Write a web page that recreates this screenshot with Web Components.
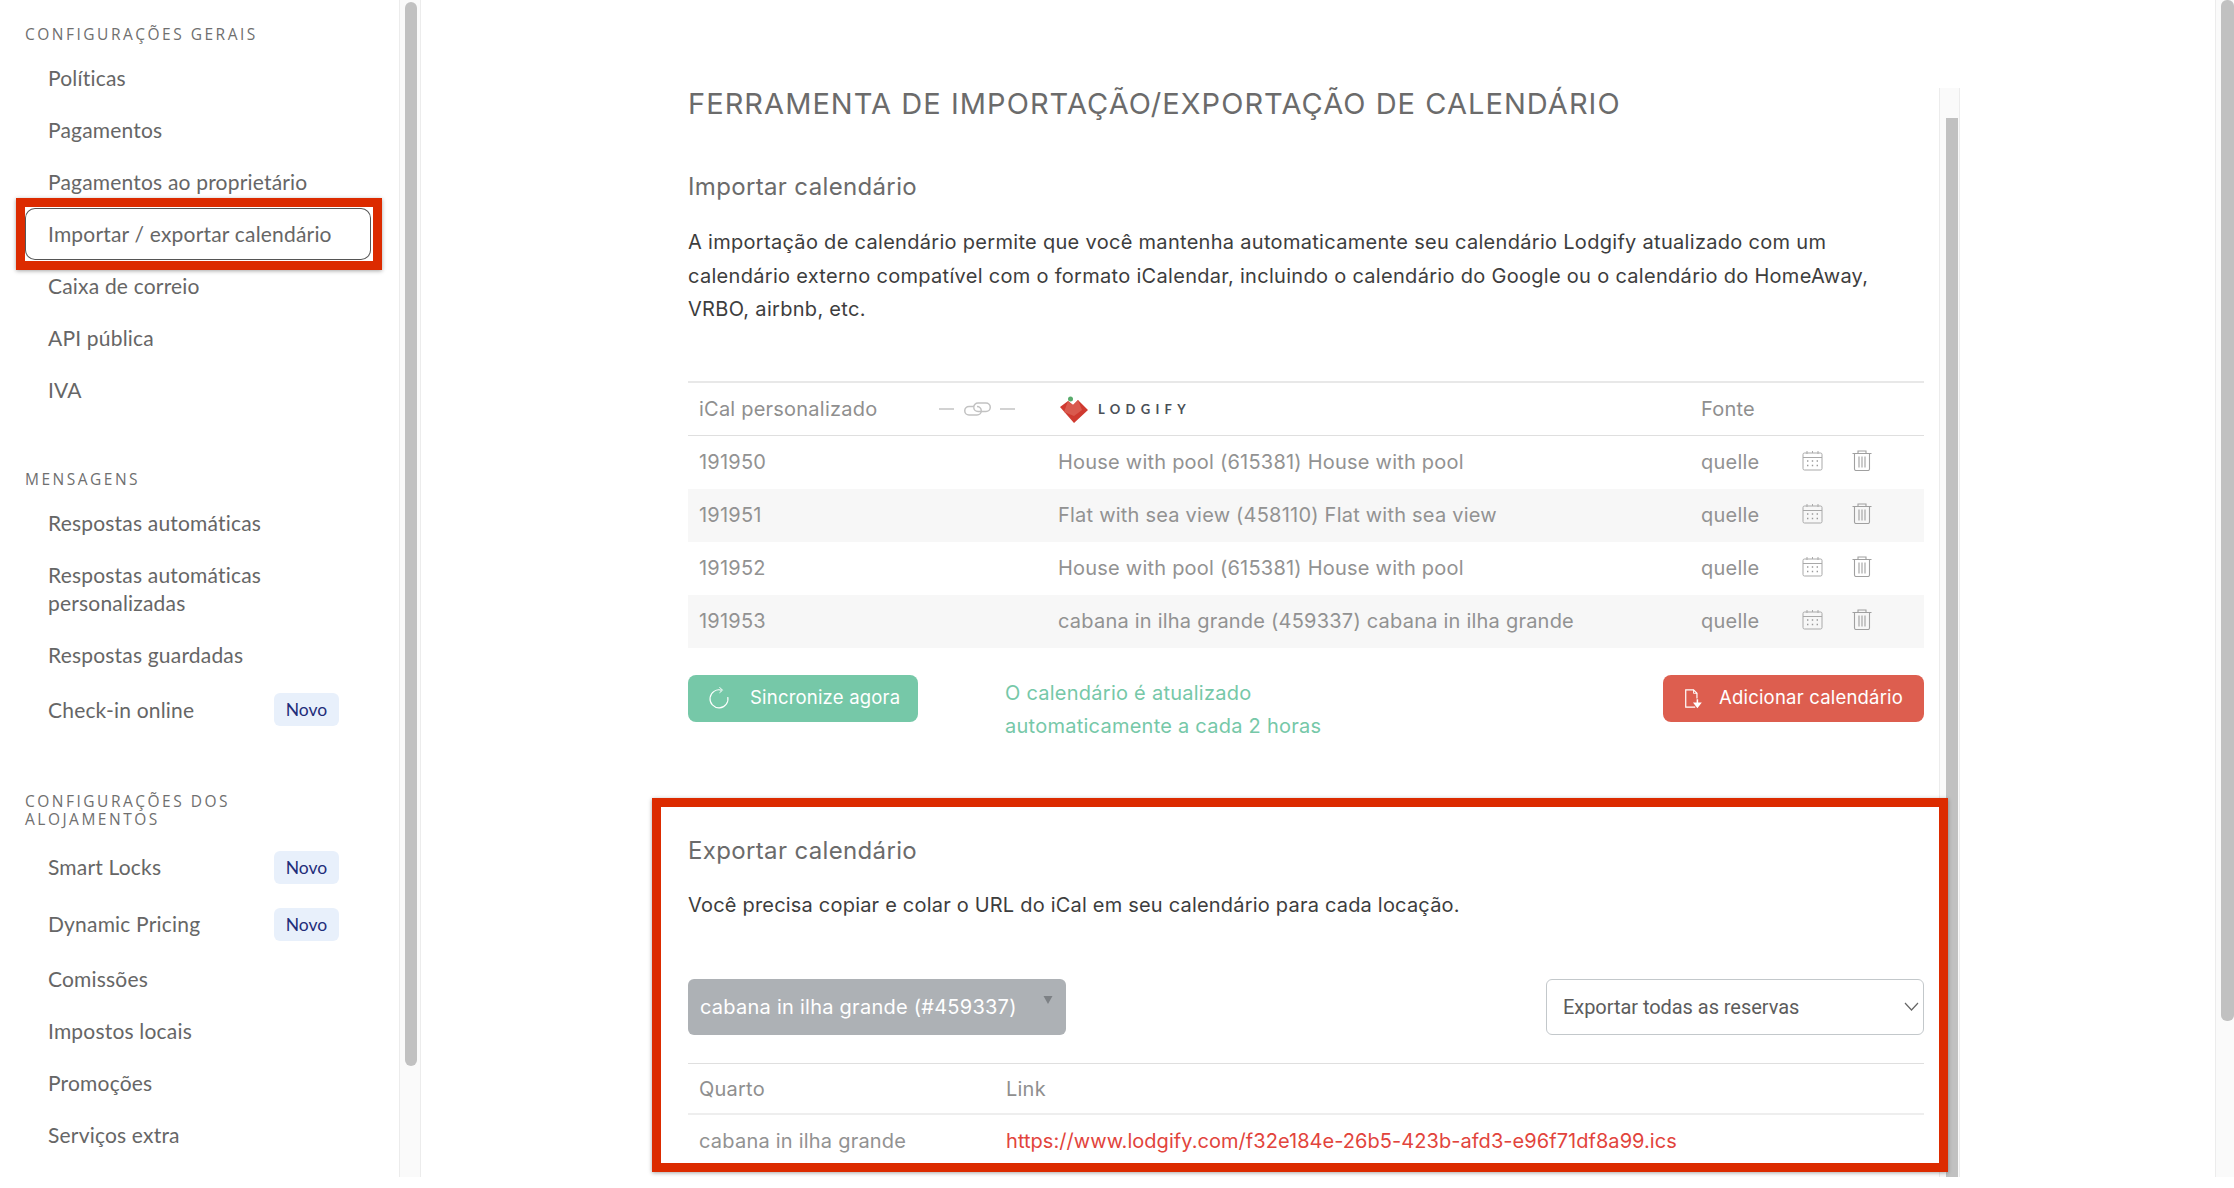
<!DOCTYPE html>
<html lang="pt">
<head>
<meta charset="utf-8">
<title>Importar / exportar calendário</title>
<style>
  html, body { margin: 0; height: 100%; overflow: hidden; background: #fff; }
</style>
</head>
<body>
<app-shell>
  <side-nav slot="nav">
    <nav-heading>Configurações gerais</nav-heading>
    <nav-item>Políticas</nav-item>
    <nav-item>Pagamentos</nav-item>
    <nav-item>Pagamentos ao proprietário</nav-item>
    <nav-item active>Importar / exportar calendário<red-mark slot="mark"></red-mark></nav-item>
    <nav-item>Caixa de correio</nav-item>
    <nav-item>API pública</nav-item>
    <nav-item>IVA</nav-item>
    <nav-heading>Mensagens</nav-heading>
    <nav-item>Respostas automáticas</nav-item>
    <nav-item>Respostas automáticas personalizadas</nav-item>
    <nav-item>Respostas guardadas</nav-item>
    <nav-item badge>Check-in online</nav-item>
    <nav-heading wide>Configurações dos alojamentos</nav-heading>
    <nav-item badge>Smart Locks</nav-item>
    <nav-item badge>Dynamic Pricing</nav-item>
    <nav-item>Comissões</nav-item>
    <nav-item>Impostos locais</nav-item>
    <nav-item>Promoções</nav-item>
    <nav-item>Serviços extra</nav-item>
  </side-nav>
  <calendar-tool slot="main"></calendar-tool>
</app-shell>

<script>
// icones do painel, desenhados a mao
const ICONS = {
  calendar: `<svg width="21" height="21" viewBox="0 0 21 21" fill="none" stroke="#a9a9a9" stroke-width="1">
    <rect x="1" y="3" width="19" height="17" rx="1.5"/><path d="M1 7.5h19M5 1v3M10.5 1v2M16 1v3"/>
    <path d="M5 11h1.4M9.8 11h1.4M14.6 11h1.4M5 15.5h1.4M9.8 15.5h1.4M14.6 15.5h1.4" stroke-width="1.6" stroke="#999"/></svg>`,
  trash: `<svg width="20" height="21" viewBox="0 0 20 21" fill="none" stroke="#a0a0a0" stroke-width="1.1">
    <path d="M0.5 3.5h19M6 3.5V1h8v2.5M2.500 3.500V19a1.500 1.500 0 0 0 1.500 1.500h12a1.500 1.500 0 0 0 1.500-1.500V3.500M7 6.500v11M10 6.500v11M13 6.500v11"/></svg>`,
  sync: `<svg width="22" height="24" viewBox="0 0 22 24" fill="none" stroke="#fff" stroke-width="1.100">
    <path d="M13.500 4.200A9 9 0 1 0 19.800 11"/><path d="M11.500 1.200l3 3-3 2.600" stroke-width="1"/></svg>`,
  addfile: `<svg width="19" height="21" viewBox="0 0 22 24" fill="none" stroke="#fff" stroke-width="1.400">
    <path d="M13 22H2V2h9l4 4v6"/><path d="M11 2v4h4" stroke-width="1"/><path d="M15.500 13v5M12.200 17.500h6.600L15.500 21.800z" fill="#fff" stroke-width="1.800"/></svg>`,
  link: `<svg width="27" height="14" viewBox="0 0 27 14" fill="none" stroke="#c2c2c2" stroke-width="1.500">
    <path d="M10 4.500H5a4.250 4.250 0 0 0 0 8.500h8a4.250 4.250 0 0 0 4.250-4.250A4.250 4.250 0 0 0 13 4.500"/>
    <path d="M9.750 5.250A4.250 4.250 0 0 1 14 1h8a4.250 4.250 0 0 1 0 8.500h-5"/><path d="M9.750 5.250A4.250 4.250 0 0 0 14 9.500h3"/></svg>`,
  heart: `<svg width="28" height="27" viewBox="0 0 28 27">
    <circle cx="10.500" cy="3" r="2.500" fill="#58ab6c"/>
    <path d="M0 11 8 5l5 4 5-5 10 10-14 13z" fill="#cf3a30"/><path d="M8 5l5 4 5-5 4 10-8 6-10-4z" fill="#d95a4e"/></svg>`
};

class UiIcon extends HTMLElement {
  connectedCallback() {
    this.attachShadow({mode: "open"}).innerHTML = `
      <style>:host{display:inline-flex;line-height:0}</style>${ICONS[this.getAttribute("name")]}`;
  }
}

class AppShell extends HTMLElement {
  constructor() {
    super();
    this.attachShadow({mode: "open"}).innerHTML = `
    <style>
      :host{display:flex;height:1177px;overflow:hidden;background:#fff}
      .rail{flex:none;width:19px;background:#fafafa;border-left:1px solid #ececec;box-sizing:border-box;padding-left:5px}
      .rail i{display:block;width:13px;height:1021px;background:#c1c1c1;border-radius:6px}
      .rail.side{width:22px;border-right:1px solid #ececec;padding:2px 0 0 5px}
      .rail.side i{width:12px;height:1064px}
      ::slotted([slot=main]){flex:1;min-width:0}
    </style>
    <slot name="nav"></slot>
    <div class="rail side"><i></i></div>
    <slot name="main"></slot>
    <div class="rail"><i></i></div>`;
  }
}

class SideNav extends HTMLElement {
  constructor() {
    super();
    this.attachShadow({mode: "open"}).innerHTML = `
    <style>
      :host{display:block;flex:none;width:399px;box-sizing:border-box;padding:25px 28px 0 25px;height:1177px;overflow:hidden;
        font-family:"Open Sans","Noto Sans",sans-serif;position:relative}
    </style>
    <slot></slot>`;
  }
}

class NavHeading extends HTMLElement {
  constructor() {
    super();
    this.attachShadow({mode: "open"}).innerHTML = `
    <style>
      :host{display:block;font:400 15.500px/18px "Open Sans",sans-serif;letter-spacing:2.500px;text-transform:uppercase;color:#6f6f6f;
        margin-bottom:9px;width:270px}
      :host(:not(:first-child)){margin-top:54px}
      :host([wide]){margin-bottom:10.500px}
    </style>
    <slot></slot>`;
  }
}

class NavItem extends HTMLElement {
  constructor() {
    super();
    const badge = this.hasAttribute("badge");
    this.attachShadow({mode: "open"}).innerHTML = `
    <style>
      :host{display:flex;align-items:center;justify-content:space-between;box-sizing:border-box;min-height:52px;
        padding:12px 32px 12px 23px;font:400 21px/28px "Lato",sans-serif;color:#666;position:relative}
      :host([badge]){min-height:57px}
      :host([active]){background:#fff;border-radius:10px;box-shadow:inset 0 0 0 1px #555}
      .txt{max-width:292px;letter-spacing:.19px}
      .badge{font:400 17.500px/33px "Lato",sans-serif;width:65px;text-align:center;background:#e8f0fb;color:#1f2d7a;border-radius:6px}
    </style>
    <span class="txt"><slot></slot></span>
    ${badge ? `<span class="badge">Novo</span>` : ""}
    <slot name="mark"></slot>`;
  }
}

// marca vermelha da captura, fica por cima do conteudo
class RedMark extends HTMLElement {
  constructor() {
    super();
    this.attachShadow({mode: "open"}).innerHTML = `
    <style>
      :host{position:absolute;inset:var(--mark-inset,-10px -11px -10px -9px);border:var(--mark-w,9px) solid #dc2b00;
        box-shadow:0 1px 4px rgba(0,0,0,.35);pointer-events:none}
    </style>`;
  }
}

class TableRow extends HTMLElement {
  constructor() {
    super();
    this.attachShadow({mode: "open"}).innerHTML = `
    <style>
      :host{display:grid;grid-template-columns:var(--cols);align-items:center;height:var(--row-h,53px);box-sizing:border-box;
        padding-left:11px;font:400 20px/28px "Inter",sans-serif;letter-spacing:.22px;color:#929292}
      :host(:nth-child(odd)){background:#f7f7f7}
      :host([head]){background:#fff;border-bottom:1px solid #dfdfdf;color:#8f8f8f;padding-top:1px}
      :host([plain]){background:#fff}
    </style>
    <slot></slot>`;
  }
}

class ToolButton extends HTMLElement {
  constructor() {
    super();
    this.attachShadow({mode: "open"}).innerHTML = `
    <style>
      :host{display:flex;align-items:center;box-sizing:border-box;height:47px;border-radius:8px;padding-left:var(--pad,20px);gap:var(--gap,20px);
        color:#fff;font:400 18.500px/24px "Inter",sans-serif;letter-spacing:.2px;background:var(--bg)}
      .lbl{margin-top:-2px}
    </style>
    <slot name="icon"></slot><span class="lbl"><slot></slot></span>`;
  }
}

class CalendarTool extends HTMLElement {
  constructor() {
    super();
    const rows = [
      ["191950", "House with pool (615381) House with pool"],
      ["191951", "Flat with sea view (458110) Flat with sea view"],
      ["191952", "House with pool (615381) House with pool"],
      ["191953", "cabana in ilha grande (459337) cabana in ilha grande"]
    ];
    const rowHtml = rows.map(r => `
      <table-row>
        <span>${r[0]}</span><span>${r[1]}</span><span>quelle</span>
        <span class="ic"><ui-icon name="calendar"></ui-icon></span><span class="ic"><ui-icon name="trash"></ui-icon></span>
      </table-row>`).join("");
    this.attachShadow({mode: "open"}).innerHTML = `
    <style>
      :host{display:flex;height:1177px;overflow:hidden;box-sizing:border-box;padding:88px 0 0 267px;gap:15px;
        font-family:"Inter",sans-serif;color:#333}
      .body{width:1236px;flex:none}
      .track{width:21px;flex:none;box-sizing:border-box;background:#fafafa;border:solid #ececec;border-width:0 1px;padding:30px 0 0 6px}
      .track i{display:block;width:12px;height:1070px;background:#c1c1c1}
      h1{font:400 29px/32px "Inter",sans-serif;letter-spacing:1.050px;color:#6b6b6b;margin:0;text-transform:uppercase}
      h2{font:400 24px/30px "Inter",sans-serif;letter-spacing:.35px;color:#6b6b6b;margin:52px 0 0}
      p{font:400 20px/33.500px "Inter",sans-serif;letter-spacing:.3px;color:#3d3d3d;margin:24px 0 0}
      .imp{margin-top:54px;border-top:2px solid #e8e8e8;--cols:359px 643px 91px 40px 10px 40px}
      .ic{display:flex;justify-content:center;margin-top:-4px}
      .ic:nth-of-type(4){grid-column:4}
      .ic:nth-of-type(5){grid-column:6}
      .chain{display:flex;align-items:center;margin-left:62px;width:76px;justify-content:space-between}
      .chain b{display:block;width:15px;height:2px;background:#d2d2d2}
      .logo{display:flex;align-items:center;gap:10px;margin-left:2px}
      .logo span{font:700 13px/16px "Lato",sans-serif;letter-spacing:5.300px;color:#4a4f57}
      .head1{display:flex;align-items:center;white-space:nowrap}
      .actions{display:flex;align-items:flex-start;margin-top:27px;height:67px}
      .sync{width:230px;--bg:#76c8a8}
      .add{width:261px;--bg:#dd5e4f;margin-left:auto;--pad:21px;--gap:16px}
      .note{font:400 20px/33px "Inter",sans-serif;letter-spacing:.25px;color:#76c8a8;margin-left:87px;padding-top:2px}
      .export{position:relative;margin-top:94px}
      .export h2{margin:0}
      .export p{margin-top:23.500px;letter-spacing:.2px}
      red-mark{--mark-inset:-38px -24px auto -36px;height:356px}
      .pick{display:flex;justify-content:space-between;margin-top:56px}
      .sel{box-sizing:border-box;height:56px;width:378px;border-radius:6px;display:flex;align-items:center;justify-content:space-between}
      .sel.a{background:#adb1b5;color:#fff;padding:0 12px 0 12px;font:400 20px/28px "Inter",sans-serif;letter-spacing:.25px}
      .sel.a svg{margin-top:-14px}
      .sel.b{border:1px solid #c3c8cb;padding:0 4px 0 16px;color:#5c5c5c;font:400 20px/28px "Roboto",sans-serif;letter-spacing:-.05px}
      .exp{margin-top:28px;border-top:1px solid #dfdfdf;--cols:307px 1fr}
      .exp table-row[head]{height:51px;border-bottom:2px solid #eee}
      .url{color:#e2443c;letter-spacing:.05px}
    </style>
    <div class="body">
      <h1>Ferramenta de importação/exportação de calendário</h1>
      <h2>Importar calendário</h2>
      <p>A importação de calendário permite que você mantenha automaticamente seu calendário Lodgify atualizado com um calendário externo compatível com o formato iCalendar, incluindo o calendário do Google ou o calendário do HomeAway, VRBO, airbnb, etc.</p>
      <div class="imp">
        <table-row head>
          <span class="head1">iCal personalizado<span class="chain"><b></b><ui-icon name="link"></ui-icon><b></b></span></span>
          <span class="logo"><ui-icon name="heart"></ui-icon><span>LODGIFY</span></span>
          <span>Fonte</span>
        </table-row>
        ${rowHtml}
      </div>
      <div class="actions">
        <tool-button class="sync"><ui-icon slot="icon" name="sync"></ui-icon>Sincronize agora</tool-button>
        <div class="note">O calendário é atualizado<br>automaticamente a cada 2 horas</div>
        <tool-button class="add"><ui-icon slot="icon" name="addfile"></ui-icon>Adicionar calendário</tool-button>
      </div>
      <section class="export">
        <red-mark></red-mark>
        <h2>Exportar calendário</h2>
        <p>Você precisa copiar e colar o URL do iCal em seu calendário para cada locação.</p>
        <div class="pick">
          <div class="sel a"><span>cabana in ilha grande (#459337)</span>
            <svg width="12" height="10" viewBox="0 0 12 10"><path d="M1.500 1h9L6 9z" fill="#7d8185"/></svg></div>
          <div class="sel b"><span>Exportar todas as reservas</span>
            <svg width="15" height="9" viewBox="0 0 15 9" fill="none" stroke="#666" stroke-width="1.200"><path d="M1 1l6.500 7L14 1"/></svg></div>
        </div>
        <div class="exp">
          <table-row head><span>Quarto</span><span>Link</span></table-row>
          <table-row plain><span>cabana in ilha grande</span><span class="url">https://www.lodgify.com/f32e184e-26b5-423b-afd3-e96f71df8a99.ics</span></table-row>
        </div>
      </section>
    </div>
    <div class="track"><i></i></div>`;
  }
}

customElements.define("ui-icon", UiIcon);
customElements.define("app-shell", AppShell);
customElements.define("side-nav", SideNav);
customElements.define("nav-heading", NavHeading);
customElements.define("nav-item", NavItem);
customElements.define("red-mark", RedMark);
customElements.define("table-row", TableRow);
customElements.define("tool-button", ToolButton);
customElements.define("calendar-tool", CalendarTool);
</script>
</body>
</html>
